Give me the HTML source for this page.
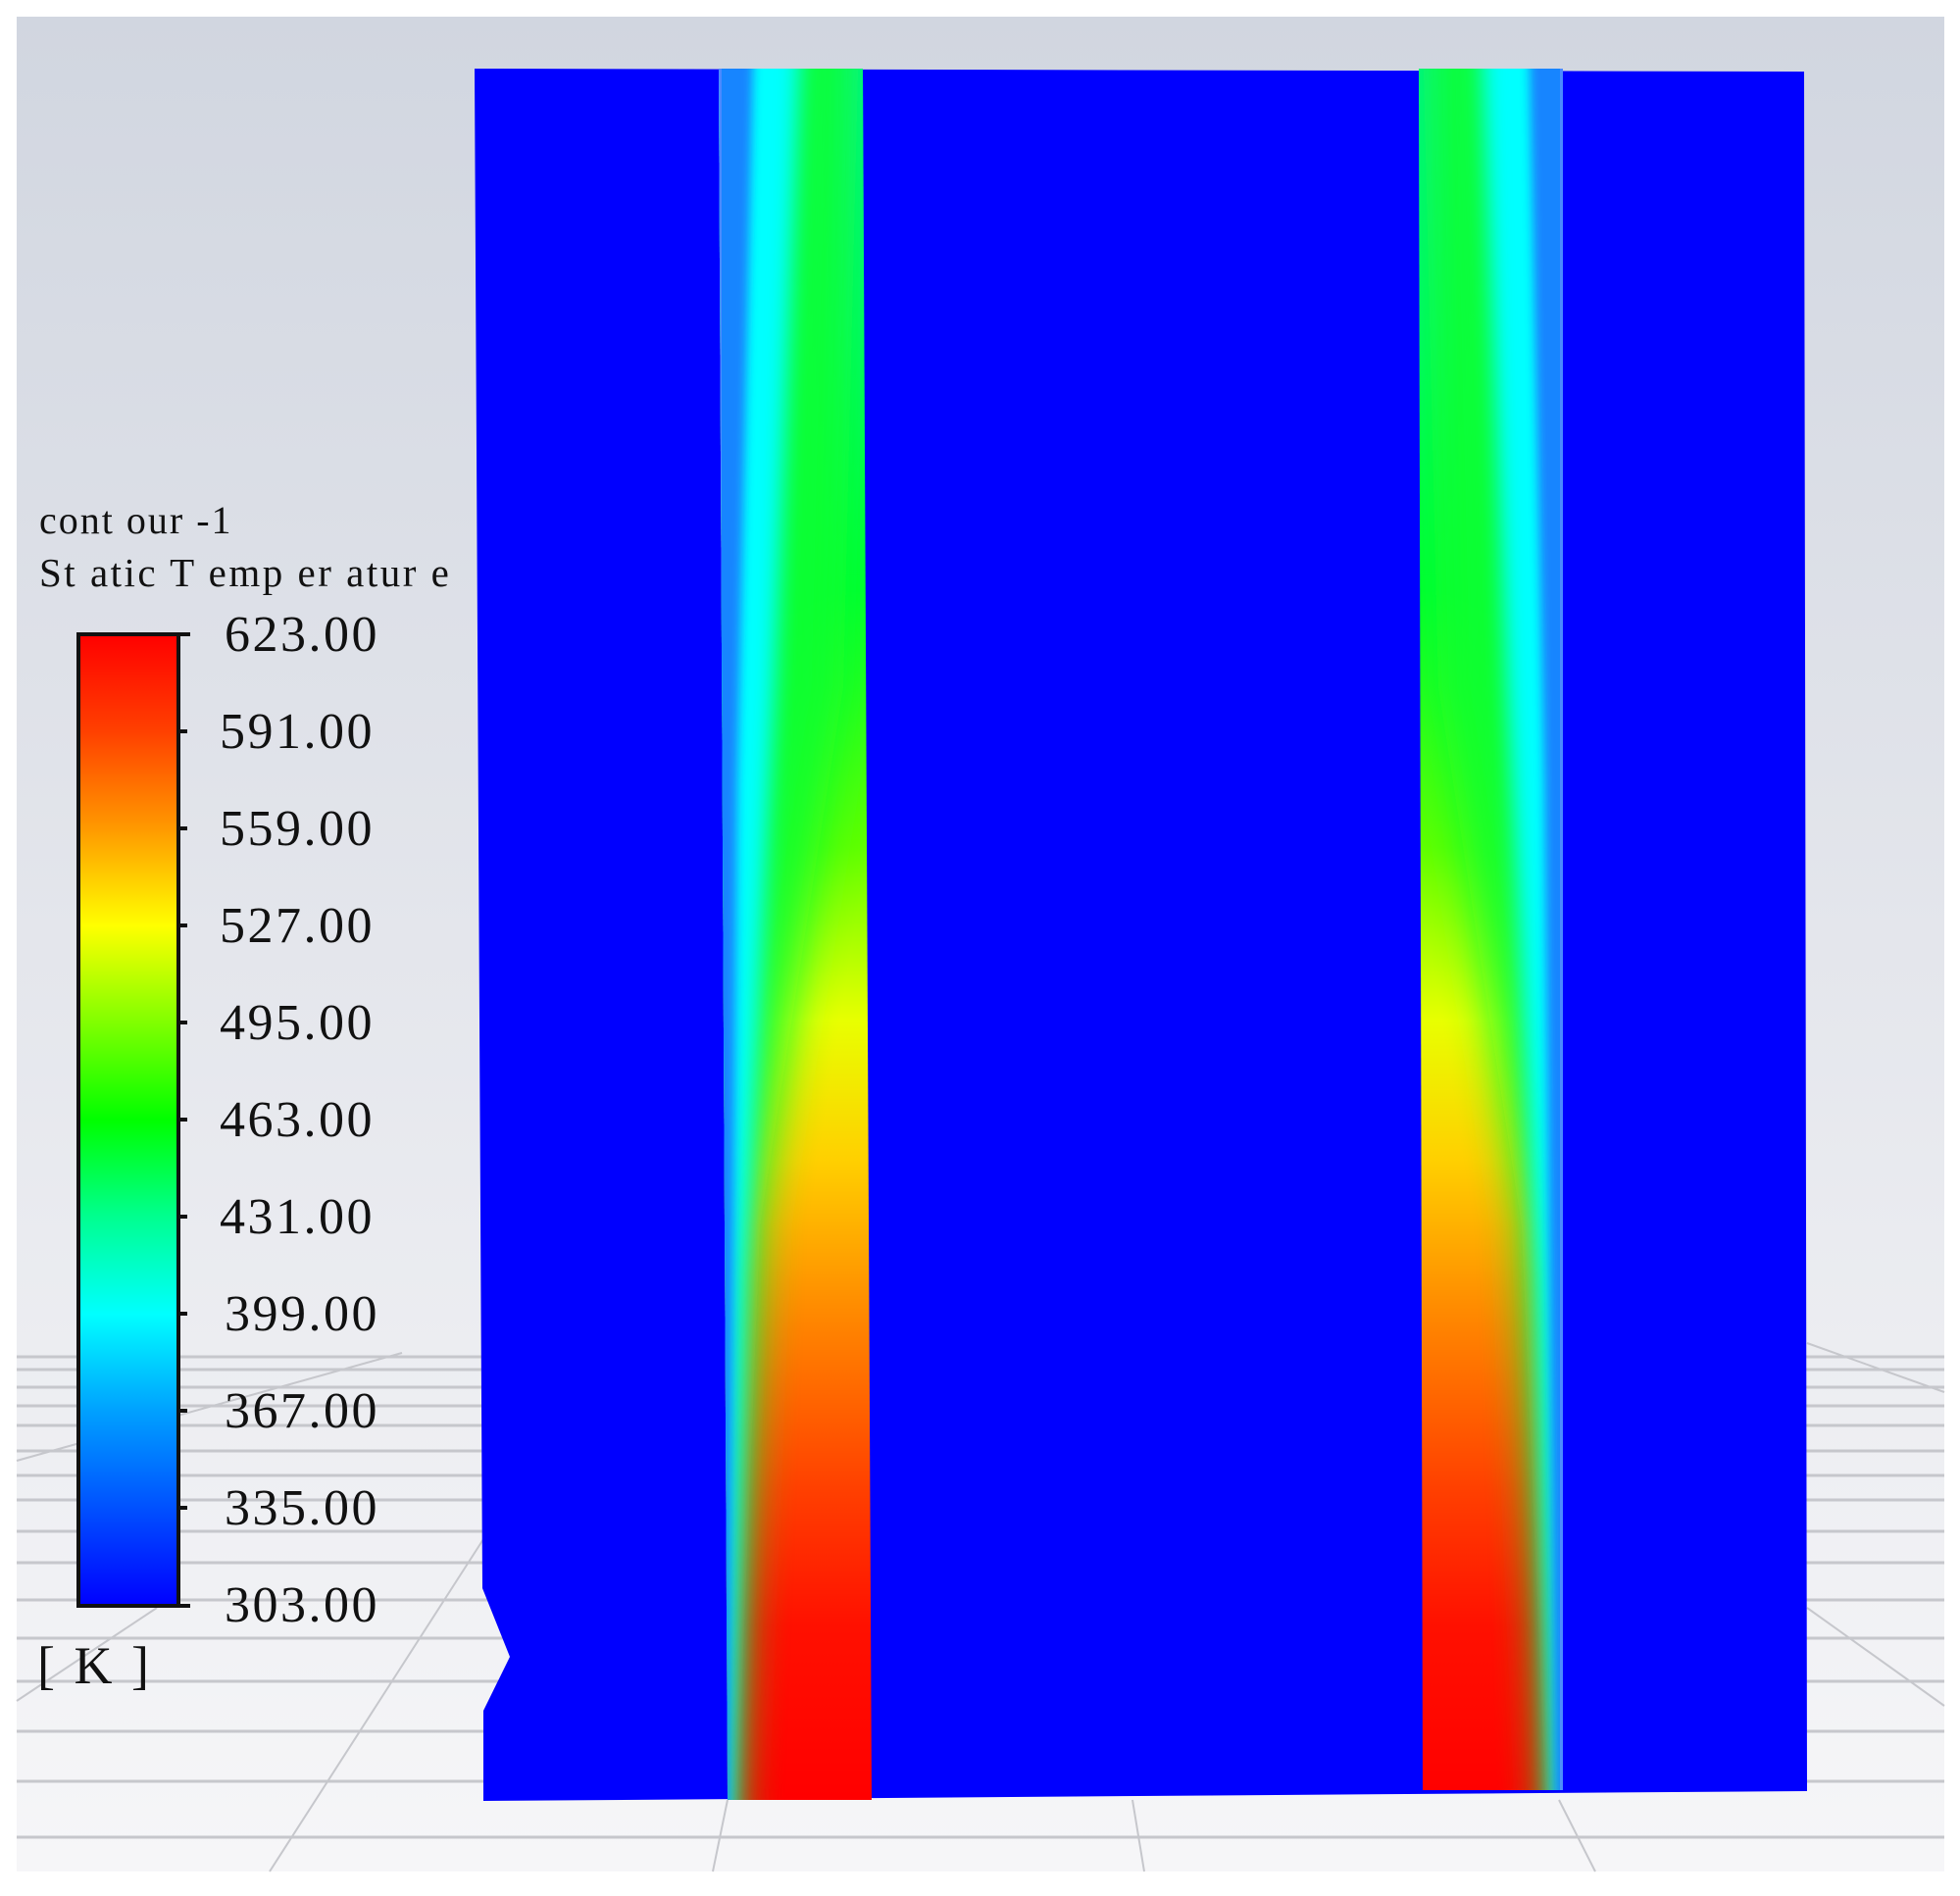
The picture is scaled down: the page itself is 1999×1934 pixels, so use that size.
<!DOCTYPE html>
<html><head><meta charset="utf-8"><style>
html,body{margin:0;padding:0;background:#fff;}
svg{display:block;}
text{font-family:"Liberation Serif","DejaVu Serif",serif;fill:#111;}
</style></head><body>
<svg width="1999" height="1934" viewBox="0 0 1999 1934" xmlns="http://www.w3.org/2000/svg">
<defs>
<linearGradient id="bg" x1="0" y1="0" x2="0" y2="1">
<stop offset="0" stop-color="#d1d6e0"/><stop offset="0.5" stop-color="#e4e6ec"/><stop offset="1" stop-color="#f6f6f8"/>
</linearGradient>
<linearGradient id="hot" gradientUnits="userSpaceOnUse" x1="0" y1="70" x2="0" y2="1836">
<stop offset="0" stop-color="#00f0a0"/><stop offset="0.15" stop-color="#00f870"/>
<stop offset="0.3" stop-color="#00ff30"/><stop offset="0.45" stop-color="#60ff00"/>
<stop offset="0.55" stop-color="#e8ff00"/><stop offset="0.63" stop-color="#ffd000"/>
<stop offset="0.72" stop-color="#ff8800"/><stop offset="0.82" stop-color="#ff4000"/>
<stop offset="0.9" stop-color="#ff1000"/><stop offset="1" stop-color="#ff0000"/>
</linearGradient>
<linearGradient id="cb" x1="0" y1="0" x2="0" y2="1">
<stop offset="0" stop-color="#ff0000"/><stop offset="0.1" stop-color="#ff4000"/>
<stop offset="0.2" stop-color="#ff9900"/><stop offset="0.3" stop-color="#ffff00"/>
<stop offset="0.4" stop-color="#80ff00"/><stop offset="0.5" stop-color="#00ff00"/>
<stop offset="0.6" stop-color="#00ff90"/><stop offset="0.7" stop-color="#00ffff"/>
<stop offset="0.8" stop-color="#00a0ff"/><stop offset="0.9" stop-color="#0050ff"/>
<stop offset="1" stop-color="#0000ff"/>
</linearGradient>
<filter id="b25" x="-50%" y="-10%" width="200%" height="120%"><feGaussianBlur stdDeviation="22 0"/></filter>
<filter id="b12" x="-50%" y="-10%" width="200%" height="120%"><feGaussianBlur stdDeviation="11 0"/></filter>
<filter id="b5" x="-50%" y="-10%" width="200%" height="120%"><feGaussianBlur stdDeviation="5 0"/></filter>
<clipPath id="chL"><polygon points="733,70 880,70 889,1836 742,1836"/></clipPath>
<clipPath id="chR"><polygon points="1447,70 1594,70 1594,1826 1451,1826"/></clipPath>
</defs>
<rect x="17" y="17" width="1966" height="1892" fill="url(#bg)"/>
<g stroke="#c6c7cc" stroke-width="3" fill="none">
<path d="M17 1384H1983M17 1397H1983M17 1415H1983M17 1434H1983M17 1454H1983M17 1480H1983M17 1505H1983M17 1530H1983M17 1562H1983M17 1594H1983M17 1632H1983M17 1671H1983M17 1715H1983M17 1766H1983M17 1817H1983M17 1874H1983"/>
<path d="M17 1490L410 1380M17 1735L160 1640M275 1909L493 1570M727 1909L742 1836M1167 1909L1155 1836M1627 1909L1590 1836M1983 1420L1843 1370M1983 1740L1843 1640" stroke-width="2"/>
</g>
<polygon points="484,70 1840,73 1843,1827 493,1837 493,1745 520,1690 492,1620" fill="#0000ff"/>
<!-- left channel -->
<polygon points="733,70 880,70 889,1836 742,1836" fill="url(#hot)"/>
<g clip-path="url(#chL)">
<polygon points="700,70 875,70 860,700 775,1250 752,1836 700,1836" fill="#10ff30" filter="url(#b25)" opacity="0.9"/>
<polygon points="700,70 815,70 790,700 760,1300 747,1836 700,1836" fill="#00ffff" filter="url(#b12)"/>
<polygon points="700,70 768,70 752,800 743,1836 700,1836" fill="#1a70ff" filter="url(#b5)" opacity="0.85"/>
<rect x="730" y="70" width="6" height="1766" fill="#8090ff" opacity="0.5"/>
</g>
<!-- right channel -->
<polygon points="1447,70 1594,70 1594,1826 1451,1826" fill="url(#hot)"/>
<g clip-path="url(#chR)">
<polygon points="1630,70 1452,70 1467,700 1552,1250 1576,1826 1630,1826" fill="#10ff30" filter="url(#b25)" opacity="0.9"/>
<polygon points="1630,70 1512,70 1537,700 1567,1300 1582,1826 1630,1826" fill="#00ffff" filter="url(#b12)"/>
<polygon points="1630,70 1560,70 1575,800 1586,1826 1630,1826" fill="#1a70ff" filter="url(#b5)" opacity="0.85"/>
<rect x="1591" y="70" width="6" height="1756" fill="#8090ff" opacity="0.5"/>
</g>
<!-- legend -->
<text x="40" y="544" font-size="40" letter-spacing="2">cont our -1</text>
<text x="40" y="598" font-size="41" letter-spacing="2.5">St atic T emp er atur e</text>
<rect x="80" y="647" width="102" height="991" fill="url(#cb)" stroke="#111" stroke-width="4"/>
<g stroke="#111" stroke-width="4">
<path d="M182 647h12M182 746h9M182 845h9M182 944h9M182 1043h9M182 1142h9M182 1241h9M182 1340h9M182 1439h9M182 1538h9M182 1638h12"/>
</g>
<g font-size="52" letter-spacing="2.5">
<text x="229" y="664">623.00</text><text x="224" y="763">591.00</text>
<text x="224" y="862">559.00</text><text x="224" y="961">527.00</text>
<text x="224" y="1060">495.00</text><text x="224" y="1159">463.00</text>
<text x="224" y="1258">431.00</text><text x="229" y="1357">399.00</text>
<text x="229" y="1456">367.00</text><text x="229" y="1555">335.00</text>
<text x="229" y="1654">303.00</text>
</g>
<text x="38" y="1717" font-size="54" letter-spacing="3">[ K ]</text>
</svg>
</body></html>
